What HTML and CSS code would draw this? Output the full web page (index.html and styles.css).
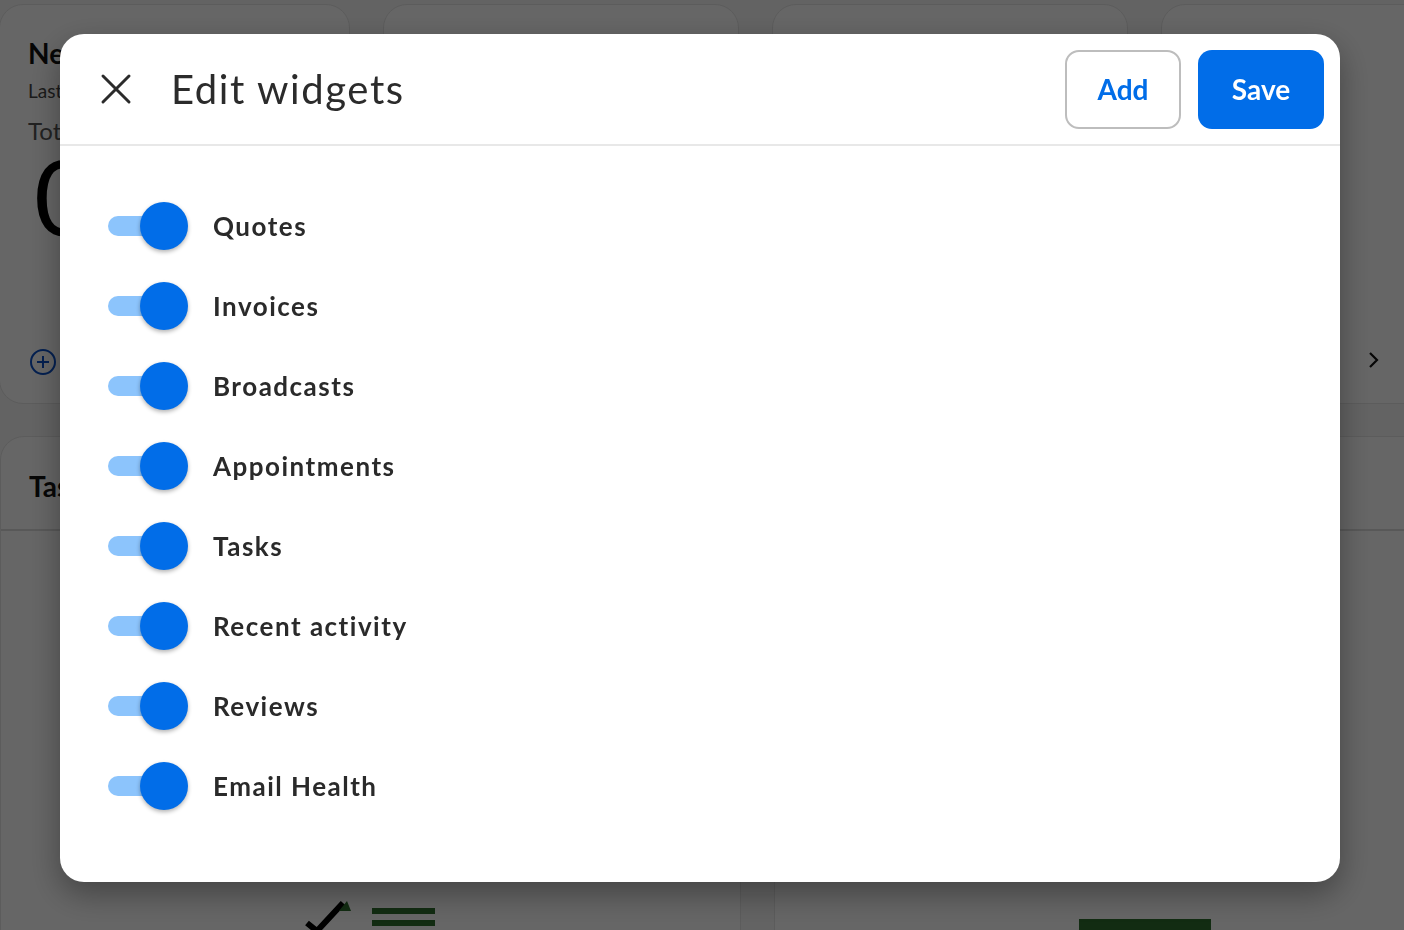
FILE: index.html
```
<!DOCTYPE html>
<html lang="en">
<head>
    <meta charset="UTF-8">
    <meta name="viewport" content="width=device-width, initial-scale=1.0">
    <link rel="stylesheet" href="styles.css">
    <title>Edit widgets</title>
</head>
<body>
    <!-- dashboard behind the dialog -->
    <div class="dashboard">
        <div class="row top-row">
            <div class="card stat-card">
                <div class="card-title">New contacts</div>
                <div class="card-sub">Last 30 days</div>
                <div class="card-label">Total</div>
                <div class="card-big">0</div>
                <div class="card-foot">
                    <svg width="28" height="28" viewBox="0 0 28 28">
                        <circle cx="14" cy="14" r="12" fill="none" stroke="#0a50c8" stroke-width="2"/>
                        <path d="M14 8v12M8 14h12" stroke="#0a50c8" stroke-width="2"/>
                    </svg>
                </div>
            </div>
            <div class="card stat-card"></div>
            <div class="card stat-card"></div>
            <div class="card stat-card last">
                <div class="card-foot right">
                    <svg width="14" height="20" viewBox="0 0 14 20">
                        <path d="M4 3l7 7-7 7" fill="none" stroke="#111" stroke-width="2.2"/>
                    </svg>
                </div>
            </div>
        </div>
        <div class="row bottom-row">
            <div class="card wide-card">
                <div class="wide-head">Tasks</div>
                <div class="wide-body">
                    <div class="task-art">
                        <span class="check-box">
                            <svg width="54" height="30" viewBox="0 0 54 30">
                                <path d="M4 22l10 8L40 2" fill="none" stroke="#000" stroke-width="6"/>
                                <path d="M36 10l8-10 4 10z" fill="#2d6e2d"/>
                            </svg>
                        </span>
                        <span class="lines"><i></i><i></i></span>
                    </div>
                </div>
            </div>
            <div class="card wide-card">
                <div class="wide-head"></div>
                <div class="wide-body">
                    <div class="chart-art"><i></i><i></i></div>
                </div>
            </div>
        </div>
    </div>

    <div class="overlay"></div>

    <div class="modal">
        <div class="modal-header">
            <button class="close-btn" aria-label="Close">
                <svg width="32" height="32" viewBox="0 0 32 32">
                    <path d="M3 3l26 26M29 3L3 29" stroke="#2b2b2b" stroke-width="3" stroke-linecap="round"/>
                </svg>
            </button>
            <h1 class="modal-title">Edit widgets</h1>
            <div class="header-actions">
                <button class="btn btn-outline">Add</button>
                <button class="btn btn-primary">Save</button>
            </div>
        </div>
        <ul class="widget-list">
            <li class="widget-row"><span class="switch"><span class="thumb"></span></span>Quotes</li>
            <li class="widget-row"><span class="switch"><span class="thumb"></span></span>Invoices</li>
            <li class="widget-row"><span class="switch"><span class="thumb"></span></span>Broadcasts</li>
            <li class="widget-row"><span class="switch"><span class="thumb"></span></span>Appointments</li>
            <li class="widget-row"><span class="switch"><span class="thumb"></span></span>Tasks</li>
            <li class="widget-row"><span class="switch"><span class="thumb"></span></span>Recent activity</li>
            <li class="widget-row"><span class="switch"><span class="thumb"></span></span>Reviews</li>
            <li class="widget-row"><span class="switch"><span class="thumb"></span></span>Email Health</li>
        </ul>
    </div>
</body>
</html>
```

FILE: styles.css
```
body {
    margin: 0;
    font-family: 'Lato', 'Open Sans', sans-serif;
    background-color: #f7f7f7;
    height: 930px;
    overflow: hidden;
}

.dashboard {
    display: flex;
    flex-direction: column;
    gap: 32px;
    padding-top: 4px;
}

.row {
    display: flex;
    gap: 33px;
}

.card {
    background-color: #ffffff;
    border: 1px solid #e6e6e6;
    border-radius: 24px;
    box-sizing: border-box;
}

.stat-card {
    width: 356px;
    height: 400px;
    flex-shrink: 0;
    padding: 31px 28px 0;
    position: relative;
}

.stat-card:first-child {
    width: 351px;
    margin-left: -1px;
}

.stat-card.last {
    width: 300px;
}

.card-title {
    font-size: 28px;
    line-height: 34px;
    font-weight: 700;
    color: #111;
}

.card-sub {
    margin-top: 9px;
    font-size: 19px;
    line-height: 24px;
    color: #444;
}

.card-label {
    margin-top: 14px;
    font-size: 24px;
    line-height: 28px;
    color: #555;
}

.card-big {
    margin: 11px 0 0 6px;
    font-size: 104px;
    line-height: 80px;
    color: #000;
}

.card-foot {
    position: absolute;
    left: 29px;
    bottom: 24px;
}

.card-foot.right {
    left: 204px;
    bottom: 30px;
}

.bottom-row {
    height: 520px;
}

.wide-card {
    flex: 0 0 741px;
    border-radius: 24px 24px 0 0;
    display: flex;
    flex-direction: column;
}

.wide-card + .wide-card {
    flex: 0 0 660px;
}

.wide-head {
    height: 94px;
    border-bottom: 2px solid #ddd;
    padding: 32px 28px 0;
    box-sizing: border-box;
    font-size: 28px;
    font-weight: 700;
    color: #111;
}

.wide-body {
    flex: 1;
    position: relative;
}

.task-art {
    position: absolute;
    left: 302px;
    top: 370px;
    display: flex;
    gap: 15px;
}

.check-box {
    width: 54px;
    height: 30px;
}

.lines {
    display: flex;
    flex-direction: column;
    gap: 6px;
    padding-top: 7px;
}

.lines i {
    display: block;
    width: 63px;
    height: 6px;
    background-color: #2d6e2d;
}

.chart-art {
    position: absolute;
    left: 304px;
    top: 388px;
    width: 132px;
    height: 40px;
    background-color: #2d6e2d;
}

.overlay {
    position: fixed;
    inset: 0;
    background-color: rgba(0, 0, 0, 0.6);
}

.modal {
    position: fixed;
    left: 60px;
    top: 34px;
    width: 1280px;
    height: 848px;
    background-color: #ffffff;
    border-radius: 24px;
    box-shadow: 0 12px 32px rgba(0, 0, 0, 0.35);
}

.modal-header {
    display: flex;
    align-items: center;
    height: 110px;
    border-bottom: 2px solid #e8e8e8;
    padding: 0 16px 0 40px;
}

.close-btn {
    border: none;
    background: none;
    padding: 0;
    width: 32px;
    height: 32px;
    margin-right: 39px;
    cursor: pointer;
}

.modal-title {
    flex: 1;
    margin: 0;
    font-size: 40px;
    font-weight: 400;
    letter-spacing: 1.6px;
    color: #2b2b2b;
}

.header-actions {
    display: flex;
    gap: 17px;
}

.btn {
    font-family: inherit;
    font-size: 28px;
    font-weight: 700;
    height: 79px;
    border-radius: 14px;
    cursor: pointer;
}

.btn-outline {
    width: 116px;
    background-color: #ffffff;
    color: #016de8;
    border: 2px solid #bdbdbd;
}

.btn-primary {
    width: 126px;
    background-color: #016de8;
    color: #ffffff;
    border: none;
}

.widget-list {
    list-style: none;
    margin: 0;
    padding: 40px 0 0 48px;
}

.widget-row {
    display: flex;
    align-items: center;
    height: 80px;
    font-size: 26px;
    font-weight: 700;
    letter-spacing: 1.5px;
    color: #2a2a2a;
}

.switch {
    position: relative;
    width: 62px;
    height: 20px;
    border-radius: 10px;
    background-color: #8cc4fc;
    margin-right: 43px;
}

.thumb {
    position: absolute;
    right: -18px;
    top: -14px;
    width: 48px;
    height: 48px;
    border-radius: 50%;
    background-color: #016de8;
    box-shadow: 0 2px 4px rgba(0, 0, 0, 0.3);
}
```
